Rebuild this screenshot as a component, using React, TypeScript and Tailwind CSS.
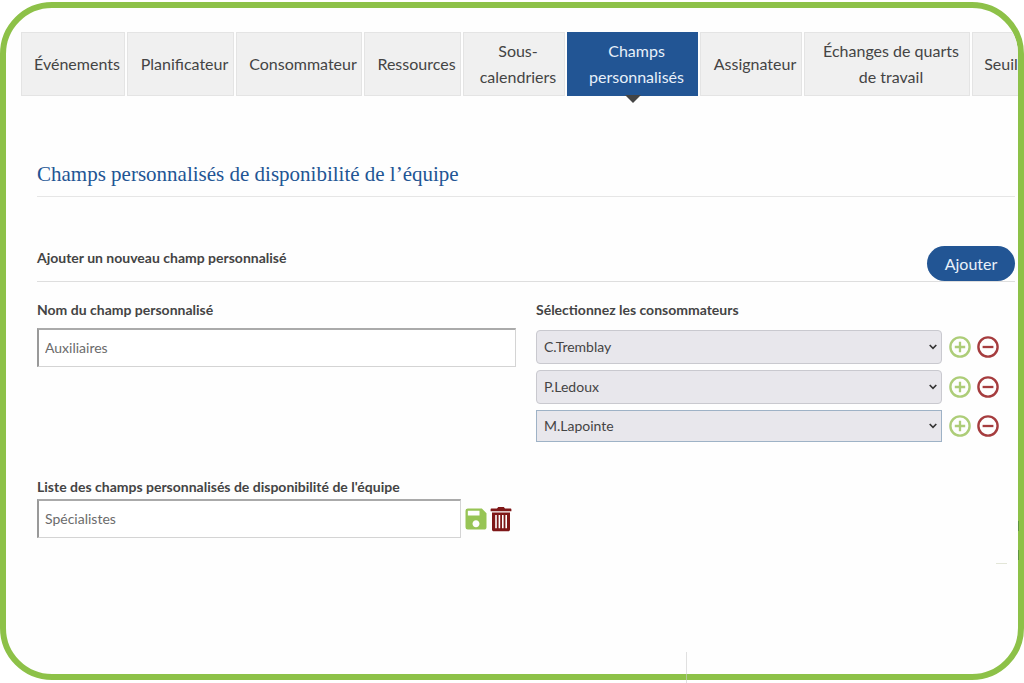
import {FC, useState} from "react";
import {MdSave} from "react-icons/md";
import clsx from "clsx";

interface Tab {
  label: string;
  width: string;
}

const TABS: Tab[] = [
  {label: "Événements", width: "w-[104px]"},
  {label: "Planificateur", width: "w-[107px]"},
  {label: "Consommateur", width: "w-[126px]"},
  {label: "Ressources", width: "w-[97px]"},
  {label: "Sous-calendriers", width: "w-[102px]"},
  {label: "Champs personnalisés", width: "w-[131px]"},
  {label: "Assignateur", width: "w-[102px]"},
  {label: "Échanges de quarts de travail", width: "w-[166px]"},
  {label: "Seuil", width: "w-[50px]"},
];

const ACTIVE_TAB = "Champs personnalisés";

const CONSUMERS = ["C.Tremblay", "P.Ledoux", "M.Lapointe"];

const CircleIcon: FC<{plus?: boolean}> = ({plus = false}) => (
  <svg viewBox="0 0 22 22" className="size-[22px]" fill="none" stroke="currentColor">
    <circle cx="11" cy="11" r="9.6" strokeWidth="2.4" />
    <path d={plus ? "M5.8 11h10.4M11 5.8v10.4" : "M5.6 11h10.8"} strokeWidth="2.3" />
  </svg>
);

const TrashIcon: FC = () => (
  <svg viewBox="0 0 22 26" className="h-[26px] w-[22px]" fill="currentColor">
    <path d="M7 2.6 8.2 1h5.6L15 2.6h5.6c.5 0 .8.3.8.8v1.8H.6V3.4c0-.5.3-.8.8-.8z" />
    <path
      fillRule="evenodd"
      d="M2 6.4h18v17c0 1-.8 1.8-1.8 1.8H3.8c-1 0-1.8-.8-1.8-1.8zM5.2 9v13.2h1.6V9zm3.4 0v13.2h1.6V9zm3.4 0v13.2h1.6V9zm3.4 0v13.2H17V9z"
    />
  </svg>
);

const Tabs: FC = () => (
  <nav className="mt-6 ml-[15px] flex gap-[2px]">
    {TABS.map(({label, width}) => {
      const active = label === ACTIVE_TAB;
      return (
        <a
          key={label}
          href="#"
          aria-current={active ? "page" : undefined}
          className={clsx(
            "relative flex h-16 shrink-0 items-center justify-center border pr-1 pl-3 text-center text-base leading-[26px]",
            width,
            active
              ? "border-[#225594] bg-[#225594] text-[#e8f0fa]"
              : "border-[#e4e4e4] bg-[#f0f0f0] text-[#444]"
          )}
        >
          {label}
          {active && (
            <svg
              viewBox="0 0 16 8"
              className="absolute top-full left-1/2 h-2 w-4 -translate-x-1/2"
              fill="#444"
            >
              <path d="M0 0h16L8 8z" />
            </svg>
          )}
        </a>
      );
    })}
  </nav>
);

const inputClass =
  "h-[39px] w-full border-t-2 border-r border-b border-l-2 border-t-[#aaa] border-r-[#d4d4d4] border-b-[#d4d4d4] border-l-[#999] bg-white px-[6px] pb-px text-sm text-[#6b6b6b] outline-none";

const ConsumerRow: FC<{name: string; index: number}> = ({name, index}) => {
  const [value, setValue] = useState(name);
  // the last row is the one being edited
  const focused = index === CONSUMERS.length - 1;

  return (
    <div className="flex items-center">
      <div className="relative flex-1">
        <select
          aria-label={`Consommateur ${index + 1}`}
          value={value}
          onChange={(e) => setValue(e.target.value)}
          className={clsx(
            "block w-full appearance-none border bg-[#e8e7ec] px-[7px] text-sm text-[#444] outline-none",
            focused ? "h-8 border-[#9eb2c6]" : "h-[34px] rounded border-[#c9c9cf]"
          )}
        >
          {CONSUMERS.map((consumer) => (
            <option key={consumer}>{consumer}</option>
          ))}
        </select>
        <svg
          viewBox="0 0 8 6"
          className="pointer-events-none absolute top-1/2 right-[5px] h-[6px] w-2 -translate-y-1/2"
          fill="none"
          stroke="#333"
          strokeWidth="1.6"
        >
          <path d="m.7 1 3.3 3.4L7.3 1" />
        </svg>
      </div>
      <button type="button" aria-label="Ajouter" className="ml-[7px] text-[#adcd78]">
        <CircleIcon plus />
      </button>
      <button type="button" aria-label="Retirer" className="ml-[6px] text-[#a53c3e]">
        <CircleIcon />
      </button>
    </div>
  );
};

export default function App() {
  const [fieldName, setFieldName] = useState("Auxiliaires");
  const [listItem, setListItem] = useState("Spécialistes");

  return (
    <div className="relative flex min-h-screen flex-col bg-white pt-[2px] pb-[3px] font-['Lato',sans-serif] text-[#444]">
      <div className="flex-1 overflow-hidden rounded-[52px] border-[6px] border-[#8dc148] bg-[#fefefe]">
        <Tabs />

        <main className="mt-16 pr-[3px] pl-[31px]">
          <h1 className="border-b border-[#e6e6e6] pb-2 font-['Liberation_Serif',serif] text-[21px] leading-7 text-[#225594]">
            Champs personnalisés de disponibilité de l’équipe
          </h1>

          <div className="mt-[49px] flex items-center justify-between border-b border-[#dedede]">
            <h2 className="pb-3 text-sm font-bold">Ajouter un nouveau champ personnalisé</h2>
            <button
              type="button"
              className="h-[35px] w-[88px] rounded-full bg-[#225594] text-base text-[#e8f0fa]"
            >
              Ajouter
            </button>
          </div>

          <div className="mt-[18px] grid grid-cols-2 gap-5">
            <div>
              <label htmlFor="field-name" className="block text-sm font-bold">
                Nom du champ personnalisé
              </label>
              <input
                id="field-name"
                value={fieldName}
                onChange={(e) => setFieldName(e.target.value)}
                className={clsx(inputClass, "mt-2")}
              />
            </div>
            <fieldset className="pr-4">
              <legend className="text-sm font-bold">Sélectionnez les consommateurs</legend>
              <div className="mt-[10px] space-y-[6px]">
                {CONSUMERS.map((name, index) => (
                  <ConsumerRow key={name} name={name} index={index} />
                ))}
              </div>
            </fieldset>
          </div>

          <div className="mt-[35px]">
            <label htmlFor="list-item" className="block text-sm font-bold">
              Liste des champs personnalisés de disponibilité de l'équipe
            </label>
            <div className="mt-[2px] flex items-center">
              <div className="w-[424px]">
                <input
                  id="list-item"
                  value={listItem}
                  onChange={(e) => setListItem(e.target.value)}
                  className={inputClass}
                />
              </div>
              <button type="button" aria-label="Enregistrer" className="ml-[1px] text-[#97c455]">
                <MdSave className="size-7" />
              </button>
              <button type="button" aria-label="Supprimer" className="text-[#7e1718]">
                <TrashIcon />
              </button>
            </div>
          </div>
        </main>
      </div>

      {/* stray rules around the frame */}
      <div className="absolute bottom-0 left-[67%] h-[31px] w-px bg-[#cccccc]/60" />
      <div className="absolute right-[17px] bottom-[119px] h-px w-[11px] bg-[#e3e6d8]" />
      <div className="absolute right-[5px] bottom-[152px] h-[10px] w-px bg-[#5f9440]" />
      <div className="absolute right-[5px] bottom-[123px] h-[10px] w-px bg-[#5f9440]" />
    </div>
  );
}
